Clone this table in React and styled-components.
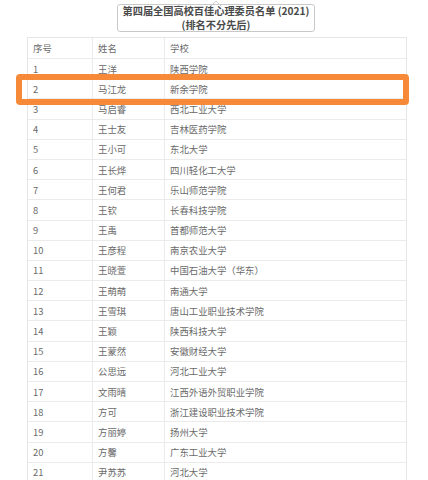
import React from "react";
import styled, { createGlobalStyle } from "styled-components";

const Global = createGlobalStyle`
  html, body { margin: 0; padding: 0; background: #fff; overflow: hidden; }
  body { font-family: "Noto Sans CJK SC", "Noto Sans", sans-serif; }
`;

const Page = styled.div`
  position: relative;
  width: 428px;
  height: 480px;
  overflow: hidden;
  display: flex;
  flex-direction: column;
  padding: 4px 21px 0 27px;
  box-sizing: border-box;
`;

const TitleBox = styled.div`
  position: relative;
  align-self: center;
  width: 198px;
  height: 31px;
  box-sizing: border-box;
  border: 1px solid #c9c9c9;
  border-radius: 3px;
  display: flex;
  flex-direction: column;
  align-items: center;
  justify-content: center;
  gap: 1px;
  font-size: 10.2px;
  line-height: 12.5px;
  font-weight: 700;
  color: #4a4a4a;
  margin-left: -2px;
`;

const TitleLine = styled.div`
  white-space: nowrap;
`;

const Notch = styled.svg`
  position: absolute;
  top: -5px;
  left: 92px;
`;

const Table = styled.div`
  margin-top: 5px;
  width: 380px;
  border: 1px solid #e6e6e6;
  box-sizing: border-box;
  display: flex;
  flex-direction: column;
`;

const Row = styled.div`
  display: grid;
  grid-template-columns: 64px 72px 1fr;
  height: ${(p) => (p.$head ? "21px" : "20.2px")};
  box-sizing: border-box;
  border-bottom: 1px solid #ebebeb;
`;

const Cell = styled.div`
  display: flex;
  align-items: center;
  padding-left: 5px;
  font-size: 9.4px;
  color: #6a6a6a;
  white-space: nowrap;
  border-left: ${(p) => (p.$first ? "none" : "1px solid #ebebeb")};
`;

const Highlight = styled.div`
  position: absolute;
  left: 16px;
  top: 74px;
  width: 393px;
  height: 31px;
  box-sizing: border-box;
  border: 6px solid #f68a38;
  border-radius: 4px;
`;

const rows = [
  ["1", "王洋", "陕西学院"],
  ["2", "马江龙", "新余学院"],
  ["3", "马启睿", "西北工业大学"],
  ["4", "王士友", "吉林医药学院"],
  ["5", "王小可", "东北大学"],
  ["6", "王长烨", "四川轻化工大学"],
  ["7", "王何君", "乐山师范学院"],
  ["8", "王钦", "长春科技学院"],
  ["9", "王禹", "首都师范大学"],
  ["10", "王彦程", "南京农业大学"],
  ["11", "王晓萱", "中国石油大学（华东）"],
  ["12", "王萌萌", "南通大学"],
  ["13", "王雪琪", "唐山工业职业技术学院"],
  ["14", "王颖", "陕西科技大学"],
  ["15", "王蒙然", "安徽财经大学"],
  ["16", "公思远", "河北工业大学"],
  ["17", "文雨晴", "江西外语外贸职业学院"],
  ["18", "方可", "浙江建设职业技术学院"],
  ["19", "方丽婷", "扬州大学"],
  ["20", "方馨", "广东工业大学"],
  ["21", "尹苏苏", "河北大学"],
  ["22", "邓雅文", "湖南师范大学"],
];

export default function App() {
  return (
    <>
      <Global />
      <Page>
        <TitleBox>
          <Notch width="12" height="6" viewBox="0 0 12 6">
            <path d="M1 6 L6 1 L11 6" fill="none" stroke="#cfcfcf" strokeWidth="1" />
          </Notch>
          <TitleLine>第四届全国高校百佳心理委员名单 (2021)</TitleLine>
          <TitleLine>(排名不分先后)</TitleLine>
        </TitleBox>
        <Table>
          <Row $head>
            <Cell $first>序号</Cell>
            <Cell>姓名</Cell>
            <Cell>学校</Cell>
          </Row>
          {rows.map((r) => (
            <Row key={r[0]}>
              <Cell $first>{r[0]}</Cell>
              <Cell>{r[1]}</Cell>
              <Cell>{r[2]}</Cell>
            </Row>
          ))}
        </Table>
        <Highlight />
      </Page>
    </>
  );
}
